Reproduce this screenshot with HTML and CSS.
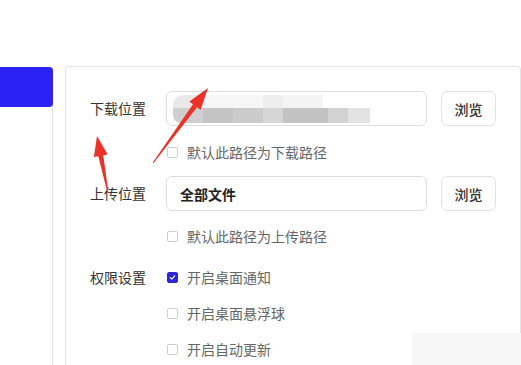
FILE: index.html
```html
<!DOCTYPE html>
<html lang="zh">
<head>
<meta charset="utf-8">
<link rel="stylesheet" href="styles.css">
</head>
<body>
<div class="top"></div>
<div class="main">
  <aside class="side"><div class="side-active"></div></aside>
  <section class="card">
    <div class="item">
      <div class="label">下载位置</div>
      <div class="body">
        <div class="field-row">
          <div class="input blurred">
            <div class="blur-top">
              <span class="b b1"></span><span class="b b2"></span><span class="b b3"></span><span class="b b4"></span>
            </div>
            <div class="blur-band">
              <span class="c c1"></span><span class="c c2"></span><span class="c c3"></span><span class="c c4"></span><span class="c c5"></span><span class="c c6"></span><span class="c c7"></span>
            </div>
          </div>
          <button class="btn">浏览</button>
        </div>
        <label class="check sub"><span class="box"></span>默认此路径为下载路径</label>
      </div>
    </div>
    <div class="item item2">
      <div class="label">上传位置</div>
      <div class="body">
        <div class="field-row">
          <div class="input"><span class="val">全部文件</span></div>
          <button class="btn">浏览</button>
        </div>
        <label class="check sub sub2"><span class="box"></span>默认此路径为上传路径</label>
      </div>
    </div>
    <div class="item item3">
      <div class="label lbl-perm">权限设置</div>
      <div class="body perms">
        <label class="check"><span class="box on"><svg viewBox="0 0 12 12" width="12" height="12"><path d="M3 6.2 L5.1 8.2 L9 3.9" fill="none" stroke="#fff" stroke-width="1.6" stroke-linecap="round" stroke-linejoin="round"/></svg></span>开启桌面通知</label>
        <label class="check"><span class="box"></span>开启桌面悬浮球</label>
        <label class="check"><span class="box"></span>开启自动更新</label>
      </div>
    </div>
  </section>
</div>
<div class="haze"></div>
<svg class="arrows" width="521" height="365" viewBox="0 0 521 365">
  <polygon points="152.6,162.7 193,104.2 189.4,101.6 208,88 200.6,109.8 197,107.2 153.4,163.3" fill="#ea3229"/>
  <polygon points="107.5,193.1 98.3,156.2 93.9,157 97,136 107.7,154.4 103.3,155.2 108.5,192.9" fill="#ea3229"/>
</svg>
</body>
</html>
```
FILE: styles.css
```css
* { box-sizing: border-box; }
html, body { margin: 0; padding: 0; }
body {
  width: 521px;
  height: 365px;
  overflow: hidden;
  background: #fff;
  font-family: "Noto Sans CJK SC", "Microsoft YaHei", sans-serif;
  font-size: 14px;
  color: #333;
  position: relative;
}
.top { height: 66px; }
.main { display: flex; height: 299px; }
.side {
  width: 53px;
  border-right: 1px solid #e2e2e2;
  margin-top: 1px;
  flex: none;
}
.side-active {
  height: 40px;
  margin-right: -1px;
  background: #2b22f6;
  border-radius: 0 4px 4px 0;
}
.card {
  margin-left: 12px;
  flex: 1;
  border: 1px solid #e4e4e4;
  border-bottom: none;
  border-radius: 4px 4px 0 0;
  padding: 24px 23px 0 24px;
}
.item { display: flex; }
.label {
  width: 76px;
  flex: none;
  line-height: 35px;
  color: #333;
}
.body { flex: 1; }
.field-row { display: flex; gap: 14px; height: 35px; }
.input {
  width: 261px;
  height: 35px;
  border: 1px solid #dedede;
  border-radius: 6px;
  display: flex;
  align-items: center;
  padding-left: 13px;
  position: relative;
  overflow: hidden;
}
.val { font-weight: bold; color: #222; }
.btn {
  width: 55px;
  height: 35px;
  border: 1px solid #e2e2e2;
  border-radius: 6px;
  background: #fff;
  font-family: inherit;
  font-size: 14px;
  color: #333;
  font-weight: 500;
  padding: 0;
}
.check {
  display: flex;
  align-items: center;
  height: 20px;
  color: #666;
  gap: 9px;
  padding-left: 1px;
}
.sub { margin-top: 16px; }
.item2 { margin-top: 14px; }
.sub2 { margin-top: 15px; }
.box {
  width: 11px;
  height: 11px;
  border: 1px solid #cfcfcf;
  border-radius: 2px;
  display: inline-flex;
  align-items: center;
  justify-content: center;
  flex: none;
}
.box.on { background: #2d27d8; border-color: #2d27d8; }
.box.on svg { width: 11px; height: 11px; }
.item3 { margin-top: 21px; }
.lbl-perm { line-height: 20px; }
.perms { display: flex; flex-direction: column; gap: 16px; }

.blurred { padding: 0; display: block; }
.blur-top { display: flex; height: 13px; margin-top: 3px; margin-left: 6px; }
.b { display: block; height: 13px; }
.b1 { width: 30px; background: #e9e9e9; border-radius: 10px 0 0 0; }
.b2 { width: 60px; background: #f6f6f6; }
.b3 { width: 20px; background: #eeeeee; }
.b4 { width: 40px; background: #f4f4f4; }
.blur-band { display: flex; height: 15px; margin-left: 6px; }
.c { display: block; height: 15px; }
.c1 { width: 30px; background: #cfcfcf; border-radius: 0 0 0 8px; }
.c2 { width: 30px; background: #c4c4c4; }
.c3 { width: 30px; background: #cbcbcb; }
.c4 { width: 20px; background: #d6d6d6; }
.c5 { width: 45px; background: #c2c2c2; }
.c6 { width: 20px; background: #d2d2d2; }
.c7 { width: 22px; background: #e3e3e3; }

.haze {
  position: absolute;
  left: 412px;
  top: 333px;
  width: 109px;
  height: 32px;
  background: #f7f7f7;
}
.arrows { position: absolute; left: 0; top: 0; pointer-events: none; }
```
